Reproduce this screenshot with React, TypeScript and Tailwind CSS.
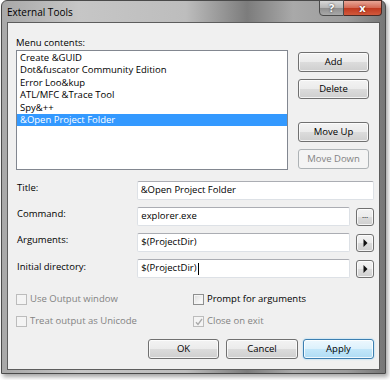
import React from 'react';

const font = "font-['Open_Sans',sans-serif] text-[9.5px]";
const btn =
  'flex items-center justify-center rounded-[3px] border border-[#707070] bg-[linear-gradient(180deg,#f3f3f3_0%,#ebebeb_50%,#dcdcdc_50%,#cfcfcf_100%)] shadow-[inset_0_0_0_1px_rgba(255,255,255,0.75)] text-black';
const btnOff =
  'flex items-center justify-center rounded-[3px] border border-[#adb2b5] bg-[#f4f4f4] text-[#838383]';
const field =
  'flex h-[19px] items-center border border-[#dde1e6] border-t-[#abadb3] bg-white pl-[3px] rounded-[2px] text-black';

function Check({ on, disabled }: { on?: boolean; disabled?: boolean }) {
  return (
    <div
      className={
        'flex h-[11px] w-[11px] items-center justify-center border ' +
        (disabled
          ? 'border-[#bcbcbc] bg-[#f4f4f4]'
          : 'border-[#8e8f8f] bg-[linear-gradient(135deg,#dcdcdc_0%,#f6f6f6_70%,#ffffff_100%)] shadow-[inset_0_0_0_1px_#f4f4f4]')
      }
    >
      {on && (
        <svg width="8" height="8" viewBox="0 0 8 8">
          <path d="M1 4.2 L3 6.5 L7 1" fill="none" stroke={disabled ? '#a9a9a9' : '#333'} strokeWidth="1.3" />
        </svg>
      )}
    </div>
  );
}

function Arrow() {
  return (
    <svg width="5" height="8" viewBox="0 0 5 8">
      <path d="M0.5 0 L4.5 4 L0.5 8 Z" fill="#111" />
    </svg>
  );
}

const items = ['Create &GUID', 'Dot&fuscator Community Edition', 'Error Loo&kup', 'ATL/MFC &Trace Tool', 'Spy&++', '&Open Project Folder'];

export default function App() {
  return (
    <div className={'h-[380px] w-[390px] overflow-hidden bg-white ' + font}>
      <div className="ml-px flex h-[374px] w-[385px] flex-col rounded-t-[6px] border border-[#4a4a4a] bg-[linear-gradient(90deg,#a8a8a8_0%,#c6c6c6_20%,#bdbdbd_48%,#7c7c7c_64%,#a9a9a9_76%,#9c9c9c_90%,#767676_100%)] shadow-[2px_3px_4px_rgba(0,0,0,0.35)]">
        {/* title bar */}
        <div className="flex h-[21px] shrink-0 items-start pl-[5px] pr-[3px]">
          <span className="mt-[4px] text-[10px] text-black">External Tools</span>
          <div className="-mt-px ml-auto flex">
            <div className="flex h-[16px] w-[25px] items-center justify-center rounded-bl-[4px] border border-[#4b4b4b] bg-[linear-gradient(180deg,#d8d8d8_0%,#b5b5b5_48%,#8f8f8f_52%,#a9a9a9_100%)] text-[11px] font-bold text-white [text-shadow:0_0_2px_#222]">
              ?
            </div>
            <div className="flex h-[16px] w-[38px] items-center justify-center rounded-br-[4px] border border-l-0 border-[#4b2a24] bg-[linear-gradient(180deg,#e8a696_0%,#d46a55_48%,#c0391f_52%,#d2593c_100%)] text-[11px] font-bold text-white [text-shadow:0_0_2px_#3a0a00]">
              x
            </div>
          </div>
        </div>

        {/* client */}
        <div className="mx-[5px] mb-[3px] flex flex-1 flex-col border border-[#5d5d5d] bg-[#f0f0f0] pl-[8px] pr-[5px] pt-[12px]">
          <div className="flex">
            <div className="w-[272px]">
              <div className="h-[15px] leading-[15px]">Menu contents:</div>
              <div className="h-[120px] border border-[#828790] bg-white pt-px">
                {items.map((it, i) => (
                  <div
                    key={it}
                    className={'h-[12.4px] pl-[3px] leading-[12.4px] ' + (i === 5 ? 'bg-[#3399ff] text-white' : 'text-black')}
                  >
                    {it}
                  </div>
                ))}
              </div>
            </div>
            <div className="ml-[10px] flex w-[71px] flex-col pt-[17px]">
              <div className={btn + ' h-[20px]'}>Add</div>
              <div className={btn + ' mt-[7px] h-[20px]'}>Delete</div>
              <div className={btn + ' mt-[23px] h-[20px]'}>Move Up</div>
              <div className={btnOff + ' mt-[7px] h-[20px]'}>Move Down</div>
            </div>
          </div>

          <div className="mt-[11px] flex flex-col gap-[7px]">
            <div className="flex h-[19px] items-center">
              <div className="w-[122px] pb-[4px] pl-[1px]">Title:</div>
              <div className={field + ' w-[240px]'}>&amp;Open Project Folder</div>
            </div>
            <div className="flex h-[19px] items-center">
              <div className="w-[122px] pb-[5px] pl-[1px]">Command:</div>
              <div className={field + ' w-[214px]'}>explorer.exe</div>
              <div className={btn + ' ml-[6px] h-[18px] w-[18px] pb-[3px] text-[8px]'}>...</div>
            </div>
            <div className="flex h-[19px] items-center">
              <div className="w-[122px] pb-[4px] pl-[1px]">Arguments:</div>
              <div className={field + ' w-[214px]'}>$(ProjectDir)</div>
              <div className={btn + ' ml-[6px] h-[18px] w-[18px]'}>
                <Arrow />
              </div>
            </div>
            <div className="flex h-[19px] items-center">
              <div className="w-[122px] pb-[2px] pl-[1px]">Initial directory:</div>
              <div className={field + ' w-[214px]'}>
                $(ProjectDir)
                <span className="ml-px inline-block h-[12px] w-px bg-black" />
              </div>
              <div className={btn + ' ml-[6px] h-[18px] w-[18px]'}>
                <Arrow />
              </div>
            </div>
          </div>

          <div className="mt-[16px] grid grid-cols-[177px_1fr] gap-y-[11px]">
            <div className="flex h-[11px] items-center gap-[3px] text-[#838383]">
              <Check disabled />
              <span>Use Output window</span>
            </div>
            <div className="flex h-[11px] items-center gap-[3px] text-black">
              <Check />
              <span>Prompt for arguments</span>
            </div>
            <div className="flex h-[11px] items-center gap-[3px] text-[#838383]">
              <Check disabled />
              <span>Treat output as Unicode</span>
            </div>
            <div className="flex h-[11px] items-center gap-[3px] text-[#838383]">
              <Check on disabled />
              <span>Close on exit</span>
            </div>
          </div>

          <div className="mt-[12px] flex justify-end">
            <div className={btn + ' h-[20px] w-[71px]'}>OK</div>
            <div className={btn + ' ml-[7px] h-[20px] w-[72px]'}>Cancel</div>
            <div className="ml-[5px] flex h-[20px] w-[71px] items-center justify-center rounded-[3px] border border-[#3c7fb1] bg-[linear-gradient(180deg,#edf8fe_0%,#dcf1fc_50%,#c3e7fa_50%,#afdcf4_100%)] text-black shadow-[inset_0_0_0_1px_rgba(255,255,255,0.8),0_0_2px_#8fd0f5]">
              Apply
            </div>
          </div>
        </div>
      </div>
    </div>
  );
}
